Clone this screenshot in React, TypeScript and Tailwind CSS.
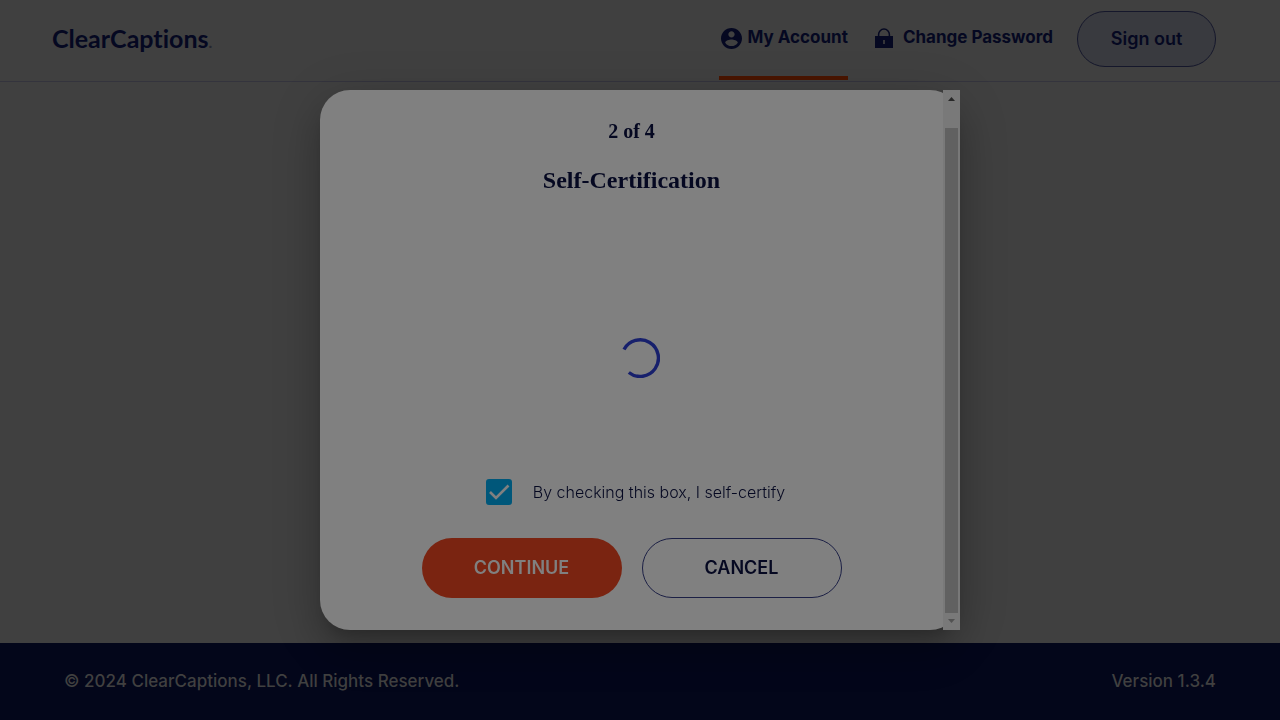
import { useState } from "react";

function AccountIcon() {
  return (
    <svg viewBox="2 2 20 20" className="size-[21px] shrink-0" fill="currentColor" aria-hidden="true">
      <path d="M12 2C6.480 2 2 6.480 2 12s4.480 10 10 10 10-4.480 10-10S17.520 2 12 2zm0 3c1.660 0 3 1.340 3 3s-1.340 3-3 3-3-1.340-3-3 1.340-3 3-3zm0 14.200c-2.500 0-4.710-1.280-6-3.220.03-1.990 4-3.080 6-3.080 1.990 0 5.970 1.090 6 3.080-1.290 1.940-3.500 3.220-6 3.220z" />
    </svg>
  );
}

function LockIcon() {
  return (
    <svg viewBox="0 0 18 20" className="h-5 w-[18px] shrink-0" aria-hidden="true">
      <path d="M3.6 9V6.500a5.400 5.400 0 0 1 10.800 0V9" fill="none" stroke="currentColor" strokeWidth="1.5" />
      <path fillRule="evenodd" fill="currentColor" d="M0 8h18v12H0zM8.200 12v4h1.600v-4z" />
    </svg>
  );
}

function Header() {
  return (
    <header className="flex h-[82px] items-start justify-between border-b border-[#34343d] pl-[52px] pr-16">
      <a
        href="#home"
        className="flex items-baseline pt-[19px] font-['Lato',sans-serif] text-[25px] leading-[38px] font-bold [font-variant-ligatures:none]"
      >
        ClearCaptions<span className="text-base text-[#25262f]">.</span>
      </a>
      <nav className="flex h-20 items-stretch text-[17px] font-bold">
        <a href="#account" className="flex items-center gap-1.5 border-b-4 border-[#4a1500] pl-0.5">
          <AccountIcon />
          My Account
        </a>
        <a href="#password" className="ml-[27px] flex items-center gap-2.5 border-b-4 border-transparent">
          <LockIcon />
          Change Password
        </a>
        <button
          type="button"
          className="mt-[11px] ml-6 h-14 w-[139px] rounded-full border border-[#15172b] bg-[#393a3f] text-lg font-semibold"
        >
          Sign out
        </button>
      </nav>
    </header>
  );
}

function Scrollbar() {
  return (
    <div className="flex w-[17px] shrink-0 flex-col items-center bg-[#797979]" aria-hidden="true">
      <svg viewBox="0 0 17 17" className="size-[17px]">
        <path d="M5 11h7L8.500 7z" fill="#282828" />
      </svg>
      <div className="mt-[21px] w-[13px] flex-1 bg-[#616161]" />
      <svg viewBox="0 0 17 17" className="size-[17px]">
        <path d="M5 6h7L8.500 10z" fill="#525252" />
      </svg>
    </div>
  );
}

function Spinner() {
  return (
    <svg viewBox="0 0 40 40" className="size-10" fill="none" role="status" aria-label="Loading">
      <path d="M4 11.500A18.300 18.300 0 1 1 8.800 34.500" stroke="#17206c" strokeWidth="3.4" />
    </svg>
  );
}

function CertificationDialog() {
  const [checked, setChecked] = useState(true);
  return (
    <div className="fixed inset-0 flex items-center justify-center">
      <section
        role="dialog"
        aria-modal="true"
        aria-labelledby="step-title"
        className="relative flex h-3/4 w-1/2 rounded-[30px] bg-[#808080] shadow-[0_11px_15px_-7px_rgba(0,0,0,0.2),0_24px_38px_3px_rgba(0,0,0,0.14),0_9px_46px_8px_rgba(0,0,0,0.12)]"
      >
        <div className="flex flex-1 flex-col items-center pt-7 pb-8">
          <p className="font-['Liberation_Serif',serif] text-xl leading-[26px] font-bold">2 of 4</p>
          <h1 id="step-title" className="mt-5 font-['Liberation_Serif',serif] text-2xl leading-8 font-bold">
            Self-Certification
          </h1>
          <label className="mt-auto flex items-center gap-[21px] pl-2 text-base font-light">
            <span className="grid size-[26px] place-items-center">
              <input
                type="checkbox"
                checked={checked}
                onChange={(event) => setChecked(event.target.checked)}
                className="peer col-start-1 row-start-1 size-[26px] appearance-none rounded-[3px] border-2 border-[#00577a] checked:bg-[#00577a]"
              />
              <svg
                viewBox="0 0 26 26"
                className="pointer-events-none invisible col-start-1 row-start-1 size-[26px] peer-checked:visible"
                fill="none"
                aria-hidden="true"
              >
                <path d="M4 13l6 6L22.500 6.500" stroke="#808080" strokeWidth="2.600" />
              </svg>
            </span>
            By checking this box, I self-certify
          </label>
          <div className="mt-[33px] flex gap-5 text-lg font-semibold">
            <button type="button" className="h-[60px] w-[200px] rounded-full bg-[#7a2411] text-[#808080]">
              CONTINUE
            </button>
            <button type="button" className="h-[60px] w-[200px] rounded-full border border-[#1c2045]">
              CANCEL
            </button>
          </div>
        </div>
        <Scrollbar />
        <div className="pointer-events-none absolute inset-0 flex items-center justify-center pb-1">
          <Spinner />
        </div>
      </section>
    </div>
  );
}

export default function App() {
  return (
    <div className="flex min-h-screen flex-col bg-[#404040] font-['Inter',sans-serif] text-[#050821]">
      <Header />
      <main className="flex-1">
        <CertificationDialog />
      </main>
      <footer className="flex h-[77px] items-center justify-between bg-[#03061a] px-16 text-[17px] font-medium text-[#404040]">
        <p>© 2024 ClearCaptions, LLC. All Rights Reserved.</p>
        <p>Version 1.3.4</p>
      </footer>
    </div>
  );
}
